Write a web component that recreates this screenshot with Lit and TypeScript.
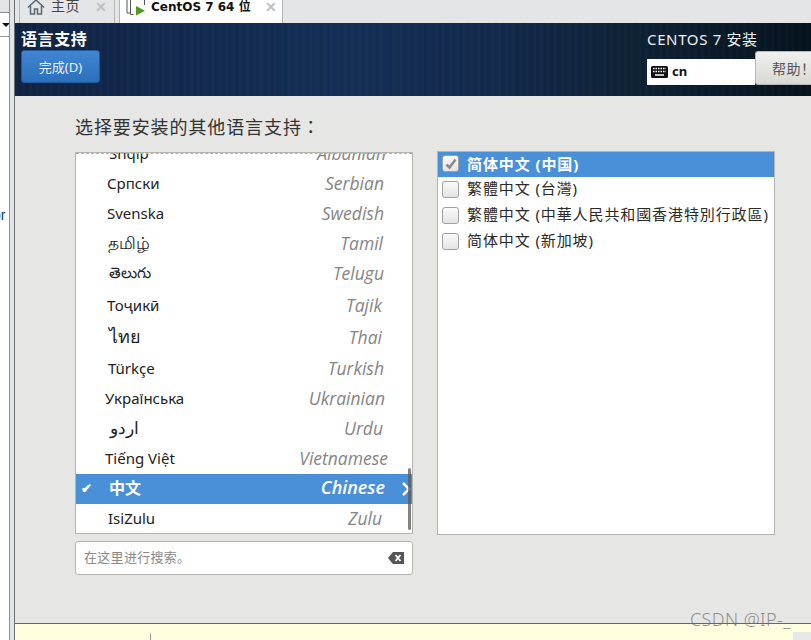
import { LitElement, html, css, svg } from "lit";
import { customElement } from "lit/decorators.js";

// n native name, e English name, h row height, l left inset, r right inset, s native font size, b lift
const rows: { n: string; e: string; h: number; l: number; r: number; s: number; b: number; sel?: boolean }[] = [
  { n: "Shqip", e: "Albanian", h: 30, l: 33, r: 26, s: 15, b: 0 },
  { n: "Српски", e: "Serbian", h: 30, l: 31, r: 28, s: 15, b: 0 },
  { n: "Svenska", e: "Swedish", h: 30, l: 31, r: 28, s: 15, b: 0 },
  { n: "தமிழ்", e: "Tamil", h: 31, l: 32, r: 29, s: 17, b: 2 },
  { n: "తెలుగు", e: "Telugu", h: 32, l: 33, r: 28, s: 15, b: 4 },
  { n: "Тоҷикӣ", e: "Tajik", h: 31, l: 31, r: 30, s: 15, b: 4 },
  { n: "ไทย", e: "Thai", h: 31, l: 33, r: 30, s: 18, b: 2 },
  { n: "Türkçe", e: "Turkish", h: 31, l: 32, r: 28, s: 15, b: 2 },
  { n: "Українська", e: "Ukrainian", h: 30, l: 29, r: 27, s: 15, b: 3 },
  { n: "اردو", e: "Urdu", h: 30, l: 34, r: 29, s: 17, b: 3 },
  { n: "Tiếng Việt", e: "Vietnamese", h: 30, l: 29, r: 24, s: 15, b: 3 },
  { n: "中文", e: "Chinese", h: 30, l: 33, r: 27, s: 16, b: 4, sel: true },
  { n: "IsiZulu", e: "Zulu", h: 30, l: 32, r: 30, s: 15, b: 3 },
];

const locales = [
  { t: "简体中文 (中国)", on: true },
  { t: "繁體中文 (台灣)" },
  { t: "繁體中文 (中華人民共和國香港特別行政區)" },
  { t: "简体中文 (新加坡)" },
];

const homeIcon = svg`<svg class="ico" width="18" height="16" viewBox="0 0 18 16" fill="none" stroke="#5a6672" stroke-width="1.5"><path d="M1 8.500 9 1l8 7.500"/><path d="M3.500 7v8h4v-5h3v5h4V7"/></svg>`;
const vmIcon = svg`<svg class="ico" width="20" height="16" viewBox="0 0 20 16"><path d="M1 0v13h3M4.500 0v14.500h3M18.500 0v5" fill="none" stroke="#555" stroke-width="1"/><path d="M10 6v9.500l9-4.750z" fill="#4e9a1e"/></svg>`;
const kbIcon = svg`<svg width="17" height="12" viewBox="0 0 17 12"><rect width="17" height="12" rx="1.500" fill="#111"/><path d="M2 2.500h13M2 5.500h13" stroke="#fff" stroke-width="1.400" stroke-dasharray="1.500 1"/><path d="M4 9h9" stroke="#fff" stroke-width="1.500"/></svg>`;
const clearIcon = svg`<svg width="16" height="12" viewBox="0 0 16 12"><path d="M5 0h11v12H5L0 6z" fill="#555"/><path d="M7.500 3l5 6M12.500 3l-5 6" stroke="#fff" stroke-width="1.800"/></svg>`;

@customElement("app-root")
export class AppRoot extends LitElement {
  static styles = css`
    :host { display: block; width: 811px; height: 640px; overflow: hidden; font-family: "Noto Sans", "Open Sans", "Noto Sans CJK SC", sans-serif; position: relative; background: #e4e5e7; }
    .frame { display: grid; grid-template-columns: 9px 6px 1fr; height: 640px; }
    .side { background: #fff; display: flex; flex-direction: column; }
    .side-top { height: 12px; background: #e4e5e7; border-bottom: 1px solid #8a8a8a; }
    .combo { height: 23px; display: flex; align-items: center; justify-content: flex-end; border-bottom: 1px solid #9a9a9a; }
    .arrow { width: 0; height: 0; border-left: 4px solid transparent; border-right: 4px solid transparent; border-top: 4px solid #111; margin-right: -1px; }
    .or { margin-top: 170px; margin-left: -7px; font: 14px "Liberation Sans", sans-serif; color: #123a8c; line-height: 16px; }
    .rail { border-left: 1px solid #8b8f94; border-right: 1px solid #6c6f70; background: #e2e4e8; }
    .main { display: flex; flex-direction: column; min-width: 0; }
    .tabs { height: 23px; display: flex; background: #e4e5e7; padding-left: 4px; gap: 4px; flex: none; overflow: hidden; }
    .tab { display: flex; align-items: flex-start; height: 23px; border: 1px solid #b4b4b4; border-top: 0; border-bottom: 0; box-sizing: border-box; font-size: 14px; line-height: 14px; }
    .ico { flex: none; margin-top: -1px; }
    .t1 { width: 96px; padding-left: 7px; color: #444; }
    .t1 .lbl { margin-left: 6px; letter-spacing: .6px; margin-top: -1px; }
    .t1 .x { margin-left: 15px; margin-top: -1px; }
    .t2 { width: 164px; padding-left: 6px; background: #fff; font-weight: 700; color: #111; font-family: "DejaVu Sans", "Noto Sans CJK SC", sans-serif; font-size: 12px; }
    .t2 .ico { margin-top: 0; }
    .t2 .lbl { margin-left: 5px; white-space: nowrap; }
    .t2 .x { margin-left: 14px; margin-top: -1px; }
    .x { color: #c0c0c0; font: 700 14px "Liberation Sans", sans-serif; }
    .head { height: 73px; flex: none; display: flex; justify-content: space-between; box-sizing: border-box; color: #fff;
      background:
        repeating-linear-gradient(90deg, rgba(255,255,255,.012) 0 3px, rgba(0,0,0,.03) 3px 7px),
        linear-gradient(90deg, #0f2342 0%, #13294e 18%, #152f58 42%, #13294a 62%, #0e2236 78%, #04131d 100%); }
    .head-l { padding: 6px 0 0 6px; display: flex; flex-direction: column; }
    .title { font-weight: 700; font-size: 16px; line-height: 21px; letter-spacing: .6px; margin-left: 0; }
    .done { width: 79px; height: 33px; box-sizing: border-box; border: 1px solid #1f5a9c; border-radius: 3px; background: linear-gradient(#4285d2, #2c6fbb); color: #e8f0fa; font-size: 13px; display: flex; align-items: center; justify-content: center; }
    .head-r { width: 164px; padding-top: 6px; box-sizing: border-box; }
    .prod { font-size: 15px; line-height: 21px; color: #f0f0f0; letter-spacing: .65px; white-space: nowrap; }
    .kb-row { display: flex; margin-top: 1px; align-items: flex-end; }
    .kb { width: 108px; flex: none; height: 26px; background: #fff; display: flex; align-items: center; padding: 0 0 1px 4px; gap: 4px; box-sizing: border-box; color: #111; font-weight: 700; font-size: 13px; }
    .kb span { margin-top: -2px; }
    .help { width: 56px; height: 34px; flex: none; box-sizing: border-box; border: 1px solid #b8b8b4; border-right: 0; border-radius: 3px 0 0 3px; background: linear-gradient(#f0f0ee, #d8d8d4); color: #555; font-size: 14px; letter-spacing: .5px; display: flex; align-items: center; padding-left: 16px; white-space: nowrap; overflow: hidden; }
    .body { flex: 1; background: #e6e6e4; padding: 19px 0 0 60px; box-sizing: border-box; min-height: 0; }
    .lead { height: 22px; font-size: 18px; line-height: 22px; color: #333; letter-spacing: .9px; white-space: nowrap; }
    .colon { font-family: "Noto Sans CJK TC", sans-serif; }
    .cols { display: flex; gap: 24px; margin-top: 15px; align-items: flex-start; }
    .left { width: 338px; display: flex; flex-direction: column; gap: 7px; }
    .list { height: 382px; box-sizing: border-box; border: 1px solid #b4b4b0; background: #fff; overflow: hidden; position: relative; }
    .inner { margin-top: -15px; }
    .dash { position: absolute; left: 0; right: 0; top: 0; border-top: 1px dashed #b0b0b0; }
    .row { display: flex; align-items: center; justify-content: space-between; box-sizing: border-box; color: #222; position: relative; }
    .row .e { font-style: italic; font-size: 17.5px; color: #858585; font-family: "Open Sans", sans-serif; font-weight: 400; line-height: 24px; }
    .row.sel { background: #4a90d9; color: #fff; font-weight: 700; }
    .row.sel .e { color: #fff; font-weight: 600; font-size: 18px; }
    .check { position: absolute; left: 5px; top: 5px; font-size: 13px; color: #fff; }
    .chev { position: absolute; right: 0; top: 7px; }
    .thumb { position: absolute; right: 1px; top: 315px; width: 3px; height: 62px; border-radius: 2px; background: rgba(90,90,90,.75); }
    .search { height: 34px; box-sizing: border-box; border: 1px solid #b4b4b0; border-radius: 3px; background: #fff; display: flex; align-items: center; justify-content: space-between; padding: 0 8px; font-size: 13px; color: #8a8a8a; }
    .search span { letter-spacing: .3px; margin-top: -3px; }
    .right { width: 338px; height: 384px; box-sizing: border-box; border: 1px solid #b4b4b0; background: #fff; margin-top: -1px; }
    .loc { height: 26px; box-sizing: border-box; padding: 0 0 2px 4px; display: flex; align-items: center; gap: 8px; font-size: 15px; color: #2a2a2a; white-space: nowrap; letter-spacing: .9px; }
    .loc > span:last-child { margin-top: -3px; }
    .loc.on { height: 25px; background: #4a90d9; color: #fff; font-weight: 700; }
    .loc.on > span:last-child { margin-top: -1px; }
    .box { width: 17px; height: 17px; box-sizing: border-box; flex: none; border: 1px solid #a0a0a0; border-radius: 3px; background: linear-gradient(#fafafa, #e4e4e4); display: flex; align-items: center; justify-content: center; }
    .foot { height: 17px; flex: none; background: #ffffe0; border-top: 1px solid #666; box-sizing: border-box; position: relative; }
    .tick { position: absolute; left: 135px; top: 10px; width: 1px; height: 6px; background: #999; }
    .closer { position: absolute; right: 0; top: 8px; width: 18px; height: 9px; background: #e8e8e8; }
    .mark { position: absolute; left: 690px; top: 607px; font-size: 18px; line-height: 24px; letter-spacing: .4px; font-weight: 300; color: rgba(110,110,110,.75); white-space: nowrap; }
  `;

  render() {
    return html`
      <div class="frame">
        <div class="side">
          <div class="side-top"></div>
          <div class="combo"><span class="arrow"></span></div>
          <div class="or">or</div>
        </div>
        <div class="rail"></div>
        <div class="main">
          <div class="tabs">
            <div class="tab t1">${homeIcon}<span class="lbl">主页</span><span class="x">✕</span></div>
            <div class="tab t2">${vmIcon}<span class="lbl">CentOS 7 64 位</span><span class="x">✕</span></div>
          </div>
          <div class="head">
            <div class="head-l">
              <div class="title">语言支持</div>
              <div class="done">完成(D)</div>
            </div>
            <div class="head-r">
              <div class="prod">CENTOS 7 安装</div>
              <div class="kb-row">
                <div class="kb">${kbIcon}<span>cn</span></div>
                <div class="help">帮助！</div>
              </div>
            </div>
          </div>
          <div class="body">
            <div class="lead">选择要安装的其他语言支持<span class="colon">：</span></div>
            <div class="cols">
              <div class="left">
                <div class="list">
                  <div class="inner">
                    ${rows.map(
                      (r) => html`<div
                        class="row ${r.sel ? "sel" : ""}"
                        style="height:${r.h}px;padding:0 ${r.r}px ${r.b}px ${r.l}px;font-size:${r.s}px"
                      >
                        ${r.sel ? html`<span class="check">✔</span>` : ""}
                        <span class="n">${r.n}</span><span class="e">${r.e}</span>
                        ${r.sel
                          ? svg`<svg class="chev" width="11" height="16" viewBox="0 0 11 16" fill="none" stroke="#fff" stroke-width="2.500"><path d="M2 2l6 6-6 6"/></svg>`
                          : ""}
                      </div>`
                    )}
                  </div>
                  <div class="dash"></div>
                  <div class="thumb"></div>
                </div>
                <div class="search"><span>在这里进行搜索。</span>${clearIcon}</div>
              </div>
              <div class="right">
                ${locales.map(
                  (l) => html`<div class="loc ${l.on ? "on" : ""}">
                    <span class="box">${l.on
                      ? svg`<svg width="12" height="12" viewBox="0 0 12 12" fill="none" stroke="#8a8a8a" stroke-width="2.500"><path d="M1.500 6.500l3 3 6-8"/></svg>`
                      : ""}</span>
                    <span>${l.t}</span>
                  </div>`
                )}
              </div>
            </div>
          </div>
          <div class="foot"><span class="tick"></span><span class="closer"></span></div>
        </div>
      </div>
      <div class="mark">CSDN @IP-_</div>
    `;
  }
}
